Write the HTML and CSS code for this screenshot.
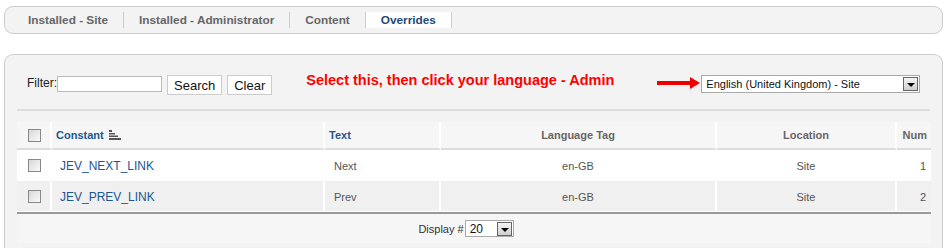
FILE: index.html
```html
<!DOCTYPE html>
<html lang="en">
<head>
  <meta charset="UTF-8" />
  <title>Language Overrides</title>
  <link rel="stylesheet" href="styles.css">
</head>
<body>
  <ul class="tabs">
    <li>Installed - Site</li>
    <li>Installed - Administrator</li>
    <li>Content</li>
    <li class="active">Overrides</li>
  </ul>

  <div class="panel">
    <div class="filter">
      <label>Filter:</label><input type="text" class="filter-input">
      <button>Search</button>
      <button>Clear</button>
      <span class="hint">Select this, then click your language - Admin</span>
      <span class="arrow"></span>
      <div class="dropdown lang">
        <span class="value">English (United Kingdom) - Site</span>
        <span class="drop-btn"></span>
      </div>
    </div>

    <table class="list">
      <thead>
        <tr>
          <th class="col-check"><span class="check"></span></th>
          <th class="col-const left"><a href="#">Constant</a>
            <svg class="sort" width="12" height="10" viewBox="0 0 12 10">
              <rect x="0" y="0" width="3" height="2" fill="#555"/>
              <rect x="0" y="3" width="6" height="1.5" fill="#555"/>
              <rect x="0" y="5.5" width="9" height="1.5" fill="#555"/>
              <rect x="0" y="8" width="12" height="2" fill="#555"/>
            </svg>
          </th>
          <th class="col-text left"><a href="#">Text</a></th>
          <th class="col-tag">Language Tag</th>
          <th class="col-loc">Location</th>
          <th class="col-num">Num</th>
        </tr>
      </thead>
      <tbody>
        <tr class="row0">
          <td class="center"><span class="check"></span></td>
          <td class="const"><a href="#">JEV_NEXT_LINK</a></td>
          <td class="text">Next</td>
          <td class="center">en-GB</td>
          <td class="center">Site</td>
          <td class="num">1</td>
        </tr>
        <tr class="row1">
          <td class="center"><span class="check"></span></td>
          <td class="const"><a href="#">JEV_PREV_LINK</a></td>
          <td class="text">Prev</td>
          <td class="center">en-GB</td>
          <td class="center">Site</td>
          <td class="num">2</td>
        </tr>
      </tbody>
      <tfoot>
        <tr>
          <td colspan="6">
            <div class="pager">
              <span>Display #</span>
              <div class="dropdown limit">
                <span class="value">20</span>
                <span class="drop-btn"></span>
              </div>
            </div>
          </td>
        </tr>
      </tfoot>
    </table>
  </div>
</body>
</html>
```

FILE: styles.css
```css
body {
  margin: 0;
  background: #fff;
  font-family: 'Liberation Sans', Arial, sans-serif;
  font-size: 12px;
  color: #333;
}
a {
  color: #1b5790;
  text-decoration: none;
}

/* tabs */
.tabs {
  display: flex;
  align-items: center;
  list-style: none;
  margin: 6px 4px 0;
  padding: 0 0 0 8px;
  height: 26px;
  border: 1px solid #ccc;
  border-radius: 9px;
  background: #f3f3f3;
}
.tabs li {
  padding: 0 15px;
  line-height: 16px;
  font-size: 11.8px;
  font-weight: bold;
  color: #666;
  border-right: 1px solid #ccc;
}
.tabs li.active {
  background: #fff;
  color: #1d4a78;
}

/* panel */
.panel {
  margin: 20px 4px 0;
  padding: 20px 12px 5px;
  border: 1px solid #ccc;
  border-bottom: none;
  border-radius: 9px 9px 0 0;
  background: #f3f3f3;
  height: 168px;
}
.filter {
  display: flex;
  align-items: flex-start;
  height: 21px;
  padding-left: 10px;
  padding-bottom: 13px;
  border-bottom: 2px solid #ddd;
}
.filter label {
  line-height: 16px;
  color: #222;
}
.filter-input {
  width: 105px;
  height: 16px;
  padding: 0;
  border: 1px solid #bbb;
  margin: 1px 5px 0 0;
  background: #fff;
  box-sizing: border-box;
}
.filter button {
  font-family: 'Liberation Sans', Arial, sans-serif;
  font-size: 13px;
  height: 20px;
  padding: 0 6px;
  margin: 0 5px 0 0;
  border: 1px solid #ccc;
  background: #fff;
  color: #111;
}
.hint {
  margin-left: 29px;
  margin-top: -3px;
  line-height: 16px;
  font-size: 14.5px;
  font-weight: bold;
  color: #f00;
}
.arrow {
  position: relative;
  margin-left: 43px;
  margin-top: 6px;
  width: 33px;
  height: 4px;
  background: #e00;
}
.arrow::after {
  content: "";
  position: absolute;
  right: -10px;
  top: -4px;
  border-left: 10px solid #e00;
  border-top: 6px solid transparent;
  border-bottom: 6px solid transparent;
}
.dropdown {
  display: flex;
  align-items: center;
  border: 1px solid #aaa;
  background: #fff;
  height: 16px;
  box-sizing: border-box;
}
.dropdown .value {
  flex: 1;
  font-size: 11px;
  color: #111;
  padding-left: 4px;
}
.lang {
  width: 219px;
  height: 18px;
  margin-left: 11px;
}
.drop-btn {
  position: relative;
  width: 15px;
  height: 14px;
  margin-right: 1px;
  border: 1px solid #666;
  background: linear-gradient(#f4f4f4, #cfcfcf);
  box-sizing: border-box;
}
.drop-btn::after {
  content: "";
  position: absolute;
  left: 3px;
  top: 5px;
  border-top: 4px solid #000;
  border-left: 4px solid transparent;
  border-right: 4px solid transparent;
}

/* table */
.list {
  width: 914px;
  margin-top: 11px;
  table-layout: fixed;
  border-collapse: separate;
  border-spacing: 0;
}
.list th {
  box-sizing: border-box;
  height: 28px;
  padding: 0 4px;
  font-size: 11px;
  font-weight: bold;
  color: #666;
  background: #f6f6f6;
  border-bottom: 2px solid #ddd;
  border-right: 2px solid #fff;
}
.list th.left {
  text-align: left;
}
.list th .sort {
  vertical-align: -1px;
  margin-left: 2px;
}
.col-check {
  width: 35px;
}
.list th.col-check {
  padding-left: 6px;
}
.col-const {
  width: 273px;
}
.list th.col-const {
  padding-left: 4px;
}
.col-text {
  width: 116px;
}
.col-tag {
  width: 276px;
}
.col-loc {
  width: 180px;
}
.list th.col-num {
  width: 34px;
  border-right: none;
  text-align: right;
}
.list td {
  box-sizing: border-box;
  height: 32px;
  padding: 0 4px;
  font-size: 11px;
  color: #555;
  border-right: 2px solid #fff;
}
.list td:first-child {
  padding-left: 6px;
}
.list td:last-child {
  border-right: none;
}
.row0 td {
  background: #fff;
  border-bottom: 1px solid #f0f0f0;
}
.row1 td {
  background: #f0f0f0;
  height: 30px;
  border-bottom: 1px solid #fff;
}
.list td.center {
  text-align: center;
}
.list td.const {
  padding-left: 8px;
  font-size: 12px;
}
.list td.text {
  padding-left: 9px;
}
.list td.num {
  text-align: right;
  padding-right: 5px;
}
.check {
  display: inline-block;
  width: 11px;
  height: 11px;
  border: 1px solid #888;
  background: linear-gradient(135deg, #d8d8d8, #fafafa);
  vertical-align: middle;
}
.list tfoot td {
  height: 31px;
  background: #f6f6f6;
  border-top: 2px solid #999;
  border-right: none;
}
.pager {
  display: flex;
  justify-content: center;
  align-items: center;
  padding-right: 18px;
  color: #333;
  font-size: 11px;
}
.limit {
  width: 49px;
  height: 17px;
  margin-left: 1px;
}
.limit .value {
  font-size: 12px;
}
```
